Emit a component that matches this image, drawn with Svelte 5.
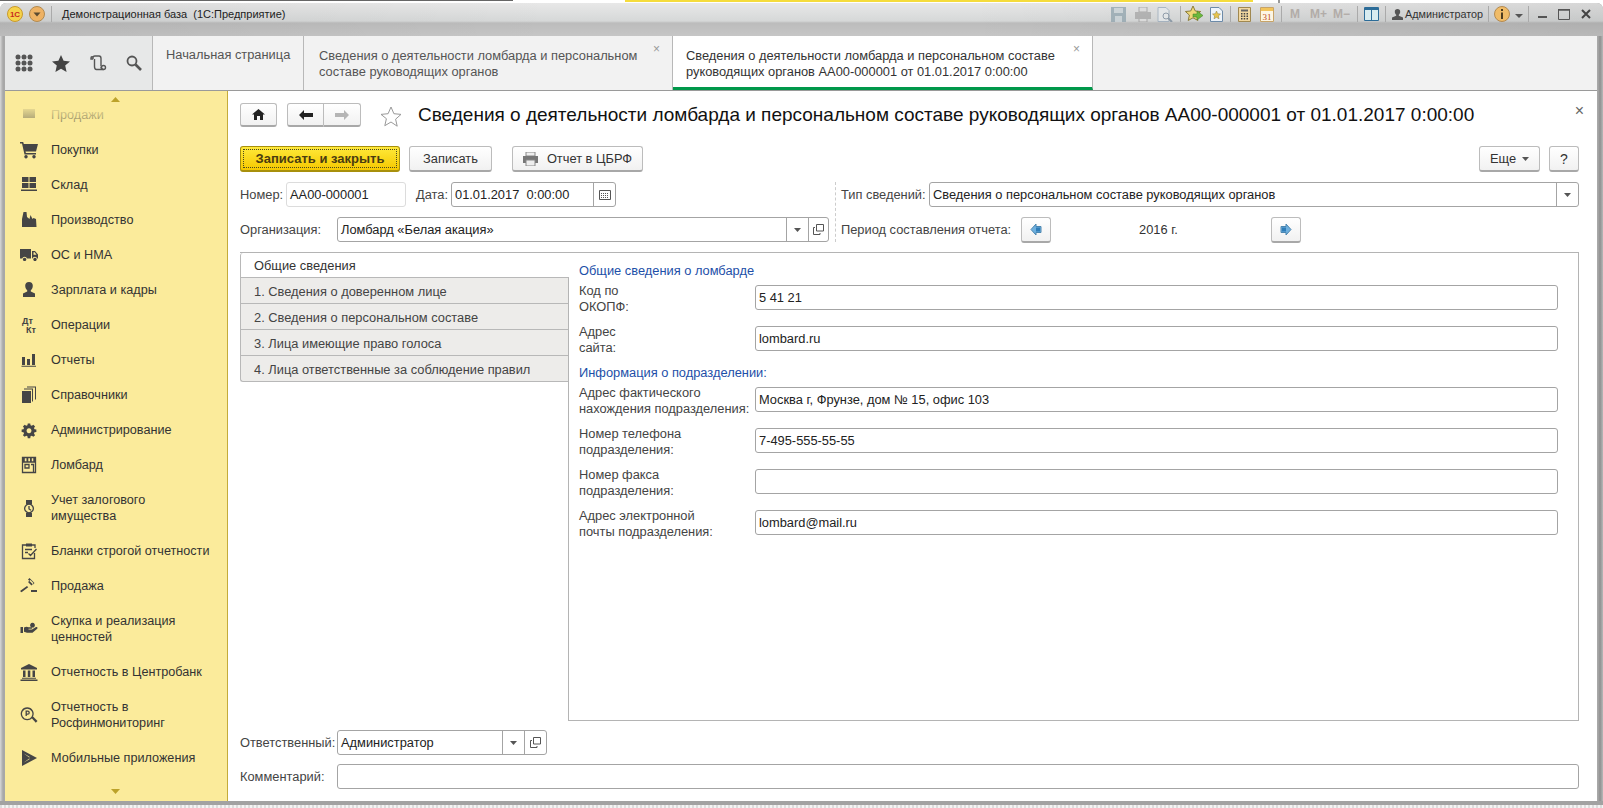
<script>
  const menu = [
    { t: 'Продажи', d: 'M3 3h12v9H3z' },
    { t: 'Покупки', d: 'M0 1h3.200l.6 2H18l-2 7.500H5.500l.4 1.500H16v1.500H4.500L2 2.500H0zM6 14a1.700 1.700 0 1 1-.01 0zM14 14a1.700 1.700 0 1 1-.01 0z' },
    { t: 'Склад', d: 'M2 1h6.500v5H2zM9.500 1H16v5H9.500zM2 7h6.500v5H2zM9.500 7H16v5H9.500zM1 13.500h16V15H1z' },
    { t: 'Производство', d: 'M2 16V8l1.500-7h3l.5 5 2.500 2 1-4 2 4 1-1 2.500 1 .5 8z' },
    { t: 'ОС и НМА', d: 'M0 3h11v9.500H7a2.500 2.500 0 0 0-4.800 0H0zM12 5h3l3 3.500v4h-.800a2.500 2.500 0 0 0-4.800 0H12zM13.500 6.300v2.500h3L14.700 6.300zM4.600 11.700a1.700 1.700 0 1 1-.01 0zM15 11.700a1.700 1.700 0 1 1-.01 0z' },
    { t: 'Зарплата и кадры', d: 'M9 1a3.800 3.800 0 0 1 3.800 3.800c0 2-1 3.800-2 4.500v1.200L15 12.500V16H3v-3.500l4.200-2V9.300c-1-.7-2-2.500-2-4.500A3.800 3.800 0 0 1 9 1z' },
    { t: 'Операции', label: true },
    { t: 'Отчеты', d: 'M2 6h3v8H2zM7 8h3v6H7zM12 3h3v11h-3zM1.500 14.800h14.500v1H1.500z' },
    { t: 'Справочники', d: 'M2 5h9v12H2zM12 3.500v12h1v-13H4v1zM15 1.500v12h1V.500H7v1z' },
    { t: 'Администрирование', vb: '-2 -2 22 22', d: 'M7.500 1h3l.4 2.200 1.500.7L14.300 2.600l2.100 2.100-1.300 1.900.6 1.500 2.300.4v3l-2.300.4-.6 1.500 1.300 1.900-2.100 2.100-1.900-1.300-1.500.6-.4 2.300h-3l-.4-2.300-1.500-.6-1.900 1.300-2.100-2.100 1.300-1.900-.6-1.500L0 11.500v-3l2.300-.4.6-1.500-1.300-1.900 2.100-2.100 1.900 1.300 1.500-.7zM9 7a3 3 0 1 0 .01 0z' },
    { t: 'Ломбард', s: 'M2.500 1.500h13v15h-13zM2.500 6h13M5 8.500h4v3.500H5zM11 8.500h2.500v8', d: 'M3 2h1.800v4H3zM6.500 2h1.800v4H6.500zM10 2h1.800v4H10zM13.300 2H15v4h-1.700z' },
    { t: 'Учет залогового\nимущества', two: true, s: 'M9 5.200a4.300 4.300 0 1 0 .01 0zM9 7v3l2 1.200', d: 'M6 1h6v4H6zM6 14h6v4H6z' },
    { t: 'Бланки строгой отчетности', s: 'M6 3H2.500v13.500h12V11M11.500 3H15v3M5 7.500h7M5 10.500h3M8.500 11.500l2 2 6-6.500', d: 'M6 1.500h6v3H6z' },
    { t: 'Продажа', d: 'M0 14l7-5 1.200 1.300-6.700 5zM8 2.500l1.500-1.500 5 5-1.500 1.500zM8 5l2.500-2 3 3-2 2.500zM11 13h6v2h-6z' },
    { t: 'Скупка и реализация\nценностей', two: true, d: 'M.500 7H3v6H.500zM4 7.500c2-1 3-1 4.500-.300h3c1 0 1 1.500 0 1.500H8.500v.800h3.500l4-2.500c1.300-.500 2 .800 1.200 1.700l-4.700 4H7l-3-1zM12.500 2.800a2.400 2.400 0 1 1-.01 0z' },
    { t: 'Отчетность в Центробанк', d: 'M9 1l8 4v1.500H1V5zM3 7.500h2.500V14H3zM7.800 7.500h2.500V14H7.800zM12.500 7.500H15V14h-2.500zM2 14.800h14v1H2zM.500 16.500h17V18H.500z' },
    { t: 'Отчетность в\nРосфинмониторинг', two: true, s: 'M7.200 2a5.800 5.800 0 1 0 .01 0zM6.200 10V5.200h1.500a1.500 1.500 0 0 1 0 3H6.200', d: 'M11.300 11.800l1.500-1.500 4.700 4.700-1.700 1.700z' },
    { t: 'Мобильные приложения', d: 'M2 1l15 8-15 8zM3.500 4.200l5.700 4.300.6-.4zM3.500 13.800l5.700-4.300.6.400z' }
  ];

  const infoRows = [
    { label: 'Адрес фактического\nнахождения подразделения:', value: 'Москва г, Фрунзе, дом № 15, офис 103' },
    { label: 'Номер телефона\nподразделения:', value: '7-495-555-55-55' },
    { label: 'Номер факса\nподразделения:', value: '' },
    { label: 'Адрес электронной\nпочты подразделения:', value: 'lombard@mail.ru' }
  ];
</script>

{#snippet openIcon()}
  <svg width="11" height="11" viewBox="0 0 11 11" fill="none" stroke="#555"><path d="M3.500 .5h7v6.500h-7zM2 3.500H.5v7h6.500V9" /></svg>
{/snippet}

{#snippet caret()}
  <svg width="7" height="4" viewBox="0 0 7 4"><path d="M0 0h7L3.500 4z" fill="#555" /></svg>
{/snippet}

{#snippet sep(cls)}
  <i class="tsep {cls}"></i>
{/snippet}

<div class="page">
  <div class="strip-top">
    <i class="s-a"></i><i class="s-b"></i><i class="s-c"></i><i class="s-d"></i>
  </div>

  <div class="window">
    <div class="titlebar">
      <svg class="logo" width="16" height="16" viewBox="0 0 16 16">
        <circle cx="8" cy="8" r="7.500" fill="#f6d24a" stroke="#c89a2e" />
        <text x="8" y="11" text-anchor="middle" font-size="8" font-weight="700" fill="#c8281e" font-family="Liberation Sans">1С</text>
      </svg>
      <svg class="menu-btn" width="16" height="16" viewBox="0 0 16 16">
        <circle cx="8" cy="8" r="7.500" fill="#eeb264" stroke="#b28a50" />
        <path d="M4.500 6.500h7L8 10.500z" fill="#5b4a30" />
      </svg>
      <i class="tsep first"></i>
      <span class="app-title">Демонстрационная база  (1С:Предприятие)</span>

      <div class="tools">
        <svg class="dim" width="15" height="15" viewBox="0 0 15 15"><path d="M0 0h15v15H0z" fill="#8fa3ad" /><path d="M3 1h9v5H3zM4 9h7v6H4z" fill="#c6d0d5" /></svg>
        <svg class="dim g9" width="16" height="15" viewBox="0 0 16 15"><path d="M4 0h8v5H4zM4 10h8v5H4z" fill="#ddd" stroke="#999" /><path d="M0 5h16v7H0z" fill="#a5a5a5" /></svg>
        <svg class="dim g6" width="16" height="15" viewBox="0 0 16 15" fill="none"><path d="M1 .5h8l3 3v11H1z" fill="#e6eaec" stroke="#9ab" /><circle cx="9" cy="9" r="3" stroke="#789" /><path d="M11 11l4 4" stroke="#789" stroke-width="2" /></svg>
        {@render sep('g7')}
        <svg class="g4" width="18" height="16" viewBox="0 0 18 16"><path d="M8 0l2.300 5 5.400.5-4 3.600 1.200 5.400L8 11.800l-4.800 2.700 1.200-5.400-4-3.600L5.700 5z" fill="#eed878" stroke="#8c7c3a" /><path d="M8 8h4V5l6 4.500-6 4.500v-3H8z" fill="#6cb83c" stroke="#3c7c22" stroke-width=".5" /></svg>
        <svg class="g7" width="13" height="15" viewBox="0 0 13 15"><path d="M.5.5h8.500l3.500 3.500v10.500H.5z" fill="#eef4fa" stroke="#6c8aa8" /><path d="M6.500 4l1.200 2.700 2.800.3-2.100 1.900.6 2.900-2.500-1.500L4 11.800l.6-2.900L2.500 7l2.800-.3z" fill="#e8c44c" stroke="#8c7c3a" stroke-width=".5" /></svg>
        {@render sep('g7')}
        <svg class="g7" width="13" height="15" viewBox="0 0 13 15"><path d="M.5.5h12v14H.5z" fill="#f2d8a0" stroke="#a08850" /><path d="M3 2.500h7v2H3z" fill="#666" /><path d="M3 6h1.500v1.500H3zM5.700 6h1.500v1.500H5.700zM8.500 6H10v1.500H8.500zM3 8.500h1.500V10H3zM5.700 8.500h1.500V10H5.700zM8.500 8.500H10V10H8.500zM3 11h1.500v1.500H3zM5.700 11h1.500v1.500H5.700zM8.500 11H10v1.500H8.500z" fill="#444" /></svg>
        <svg class="g9" width="14" height="15" viewBox="0 0 14 15"><path d="M.5.5h13v14H.5z" fill="#fdf6e4" stroke="#c8a468" /><path d="M1 1h12v3H1z" fill="#f2c45c" /><text x="7" y="13" text-anchor="middle" font-size="9" fill="#c04a14" font-family="Liberation Serif">31</text></svg>
        {@render sep('g7')}
        <span class="mem g8">M</span>
        <span class="mem g10">M+</span>
        <span class="mem g6">M−</span>
        {@render sep('g7')}
        <svg class="g6" width="15" height="14" viewBox="0 0 15 14"><path d="M.5.5h14v13H.5z" fill="#fff" stroke="#2c6c98" /><path d="M1 1h13v2H1z" fill="#2c6c98" /><path d="M7.500 1v12" stroke="#2c6c98" /><path d="M1 3h6v10H1zM8 3h6v10H8z" fill="#d8ecf0" /></svg>
        {@render sep('g6')}
        <svg class="g6" width="11" height="11" viewBox="0 0 11 11"><path d="M5.500 0a2.700 2.700 0 0 1 2.700 2.700c0 1.300-.7 2.600-1.400 3v1L11 8.500V11H0V8.500l4.200-1.800v-1c-.7-.4-1.400-1.700-1.400-3A2.700 2.700 0 0 1 5.500 0z" fill="#555" /></svg>
        <span class="user-name g2">Администратор</span>
        {@render sep('g5')}
        <svg class="g5" width="16" height="16" viewBox="0 0 16 16"><circle cx="8" cy="8" r="7.500" fill="#f0bc68" stroke="#b48a50" /><path d="M7 3h2v2H7zM7 6.500h2V13H7z" fill="#4c3c20" /></svg>
        <svg class="info-caret g5" width="8" height="4" viewBox="0 0 8 4"><path d="M0 0h8L4 4z" fill="#555" /></svg>
        {@render sep('g5')}
        <svg class="g9" width="9" height="10" viewBox="0 0 9 10"><path d="M0 7h9v2H0z" fill="#555" /></svg>
        <svg class="g11" width="12" height="11" viewBox="0 0 12 11" fill="none"><path d="M.5 1h11v9.500H.5z" stroke="#555" /><path d="M0 0h12v1.500H0z" fill="#555" /></svg>
        <svg class="g11" width="10" height="10" viewBox="0 0 10 10"><path d="M1 1l8 8M9 1l-8 8" stroke="#444" stroke-width="2" /></svg>
      </div>
    </div>

    <div class="inner">
      <div class="tabbar">
        <div class="quick">
          <svg width="18" height="18" viewBox="0 0 18 18" fill="#555">
            <circle cx="3" cy="3" r="2.500" /><circle cx="9" cy="3" r="2.500" /><circle cx="15" cy="3" r="2.500" />
            <circle cx="3" cy="9" r="2.500" /><circle cx="9" cy="9" r="2.500" /><circle cx="15" cy="9" r="2.500" />
            <circle cx="3" cy="15" r="2.500" /><circle cx="9" cy="15" r="2.500" /><circle cx="15" cy="15" r="2.500" />
          </svg>
          <svg width="18" height="17" viewBox="0 0 18 17"><path d="M9 0l2.600 5.800 6.400.6-4.800 4.200 1.400 6.400L9 13.700 3.400 17l1.400-6.400L0 6.400l6.400-.6z" fill="#444" /></svg>
          <svg width="17" height="16" viewBox="0 0 17 16" fill="none" stroke="#555" stroke-width="1.400"><path d="M3 4V2.500A1.800 1.800 0 0 1 4.800 1H9c1.500 0 2 1 2 2.500V11M3 2.500C3 1.500 1 1.500 1 3v1h2M11 11.500c0 1.500 1 3 2.500 3H6.500C5 14.500 4.500 13 4.500 11.500V4" /><circle cx="13.500" cy="12.500" r="2" /></svg>
          <svg width="16" height="16" viewBox="0 0 16 16" fill="none" stroke="#555"><circle cx="6" cy="6" r="4.500" stroke-width="1.800" /><path d="M9.500 9.500l5.500 5.500" stroke-width="2.600" /></svg>
        </div>
        <div class="tab t1"><span>Начальная страница</span></div>
        <div class="tab t2">
          <span>Сведения о деятельности ломбарда и персональном<br />составе руководящих органов</span>
          <b class="x">×</b>
        </div>
        <div class="tab t3">
          <span>Сведения о деятельности ломбарда и персональном составе<br />руководящих органов АА00-000001 от 01.01.2017 0:00:00</span>
          <b class="x">×</b>
        </div>
        <div class="tab-rest"></div>
      </div>

      <div class="body">
        <aside class="side">
          <svg class="arr up" width="9" height="5" viewBox="0 0 9 5"><path d="M4.500 0L9 5H0z" fill="#bca22a" /></svg>
          <i class="fade"></i>
          {#each menu as m}
            <div class="mi" class:two={m.two}>
              <svg class="mi-ic" width="18" height="18" viewBox={m.vb || '0 0 18 18'}>
                {#if m.label}
                  <text x="2" y="8" font-size="9" font-weight="700" fill="#444" font-family="Liberation Sans">Дт</text>
                  <text x="6" y="17" font-size="9" font-weight="700" fill="#444" font-family="Liberation Sans">Кт</text>
                {/if}
                {#if m.d}<path d={m.d} fill="#454545" fill-rule="evenodd" />{/if}
                {#if m.s}<path d={m.s} fill="none" stroke="#454545" stroke-width="1.300" />{/if}
              </svg>
              <span>{m.t}</span>
            </div>
          {/each}
          <svg class="arr down" width="9" height="5" viewBox="0 0 9 5"><path d="M0 0h9L4.500 5z" fill="#bca22a" /></svg>
        </aside>

        <main class="main">
          <div class="head">
            <button class="btn home">
              <svg width="13" height="11" viewBox="0 0 13 11"><path d="M6.500 0L13 5.500h-2V11H8V7H5v4H2V5.500H0z" fill="#222" /></svg>
            </button>
            <div class="nav">
              <button class="btn back"><svg width="14" height="10" viewBox="0 0 14 10"><path d="M0 5l5-5v3h9v4H5v3z" fill="#222" /></svg></button>
              <button class="btn fwd"><svg width="14" height="10" viewBox="0 0 14 10"><path d="M14 5L9 0v3H0v4h9v3z" fill="#b5b5b5" /></svg></button>
            </div>
            <svg class="fav" width="22" height="21" viewBox="0 0 22 21"><path d="M11 1l2.900 6.700 7.100.7-5.400 4.800 1.600 7L11 16l-6.200 3.700 1.600-7L1 8.400l7.100-.7z" fill="#fff" stroke="#999" /></svg>
            <h1>Сведения о деятельности ломбарда и персональном составе руководящих органов АА00-000001 от 01.01.2017 0:00:00</h1>
            <span class="close">×</span>
          </div>

          <div class="cmd">
            <button class="btn primary"><span>Записать и закрыть</span></button>
            <button class="btn save">Записать</button>
            <button class="btn report">
              <svg width="15" height="14" viewBox="0 0 15 14"><path d="M3 0h9v4H3z" fill="#eee" stroke="#888" /><path d="M0 4h15v7H0z" fill="#777" /><path d="M3 8h9v6H3z" fill="#eee" stroke="#888" /></svg>
              Отчет в ЦБРФ
            </button>
            <button class="btn more">Еще {@render caret()}</button>
            <button class="btn help">?</button>
          </div>

          <div class="hdr">
            <div class="hdr-l">
              <div class="row">
                <label for="n">Номер:</label>
                <div class="fld light w-num" id="n">АА00-000001</div>
                <label class="lbl-date" for="dt">Дата:</label>
                <div class="fld w-date" id="dt">
                  <span class="val">01.01.2017  0:00:00</span>
                  <i class="fb">
                    <svg width="12" height="10" viewBox="0 0 12 10"><path d="M.5.5h11v9H.5z" fill="#fff" stroke="#555" /><path d="M2 3h1v1H2zM4 3h1v1H4zM6 3h1v1H6zM8 3h1v1H8zM2 5h1v1H2zM4 5h1v1H4zM6 5h1v1H6zM8 5h1v1H8zM2 7h1v1H2zM4 7h1v1H4zM6 7h1v1H6zM8 7h1v1H8z" fill="#555" /></svg>
                  </i>
                </div>
              </div>
              <div class="row">
                <label class="lbl-org" for="org">Организация:</label>
                <div class="fld grow" id="org">
                  <span class="val">Ломбард «Белая акация»</span>
                  <i class="fb">{@render caret()}</i>
                  <i class="fb">{@render openIcon()}</i>
                </div>
              </div>
            </div>
            <div class="hdr-r">
              <div class="row">
                <label class="lbl-type" for="tp">Тип сведений:</label>
                <div class="fld grow" id="tp">
                  <span class="val">Сведения о персональном составе руководящих органов</span>
                  <i class="fb">{@render caret()}</i>
                </div>
              </div>
              <div class="row">
                <span class="lbl-period">Период составления отчета:</span>
                <button class="btn arrow">
                  <svg width="12" height="13" viewBox="0 0 12 13"><path d="M1 6.500L6 1v2.500h5v6H6V12z" fill="#6fb0de" stroke="#4c86b0" /><path d="M6 4.500h4v4H6z" fill="#2f7db8" /></svg>
                </button>
                <span class="year">2016 г.</span>
                <button class="btn arrow">
                  <svg width="12" height="13" viewBox="0 0 12 13"><path d="M11 6.500L6 1v2.500H1v6h5V12z" fill="#6fb0de" stroke="#4c86b0" /><path d="M2 4.500h4v4H2z" fill="#2f7db8" /></svg>
                </button>
              </div>
            </div>
          </div>

          <section class="panel">
            <div class="vtabs">
              <div class="vt active">Общие сведения</div>
              <div class="vt">1. Сведения о доверенном лице</div>
              <div class="vt">2. Сведения о персональном составе</div>
              <div class="vt">3. Лица имеющие право голоса</div>
              <div class="vt">4. Лица ответственные за соблюдение правил</div>
            </div>
            <div class="pane">
              <h2>Общие сведения о ломбарде</h2>
              <div class="frow">
                <div class="flabel">{'Код по\nОКОПФ:'}</div>
                <div class="fld"><span class="val">5 41 21</span></div>
              </div>
              <div class="frow">
                <div class="flabel">{'Адрес\nсайта:'}</div>
                <div class="fld"><span class="val">lombard.ru</span></div>
              </div>
              <h2 class="second">Информация о подразделении:</h2>
              {#each infoRows as r}
                <div class="frow">
                  <div class="flabel">{r.label}</div>
                  <div class="fld"><span class="val">{r.value}</span></div>
                </div>
              {/each}
            </div>
          </section>

          <div class="row foot1">
            <label class="lbl-org" for="resp">Ответственный:</label>
            <div class="fld w-resp" id="resp">
              <span class="val">Администратор</span>
              <i class="fb">{@render caret()}</i>
              <i class="fb">{@render openIcon()}</i>
            </div>
          </div>
          <div class="row foot2">
            <label class="lbl-org" for="cm">Комментарий:</label>
            <div class="fld grow" id="cm"></div>
          </div>
        </main>
      </div>
    </div>
  </div>

  <div class="strip-bottom"></div>
</div>

<style>
  :global(body) {
    margin: 0;
    background: #fff;
  }
  .page {
    width: 1603px;
    height: 808px;
    overflow: hidden;
    font-family: "Liberation Sans", Arial, sans-serif;
    font-size: 12.85px;
    color: #333;
    display: flex;
    flex-direction: column;
  }
  .page i {
    display: block;
    font-style: normal;
  }

  .strip-top {
    height: 3px;
    display: flex;
    background: #fff;
  }
  .s-a {
    width: 513px;
    height: 1px;
    background: #666;
  }
  .s-b {
    width: 112px;
  }
  .s-c {
    width: 628px;
    height: 2px;
    background: #f5dc3c;
  }
  .s-d {
    width: 2px;
    height: 3px;
    margin-left: 25px;
    background: #999;
  }

  .window {
    flex: 1;
    display: flex;
    flex-direction: column;
    min-height: 0;
    padding: 0 6px 4px 5px;
    border-radius: 6px 6px 0 0;
    background: linear-gradient(90deg, #d8d8d8 0, #a8a8a8 3px, #a8a8a8 1598px, #909090 1600px, #b8b8b8 100%);
    box-shadow: inset 0 -4px 0 #a2a2a2;
  }
  .titlebar {
    height: 33px;
    margin: 0 -6px 0 -5px;
    padding: 0 12px 0 7px;
    box-sizing: border-box;
    display: flex;
    align-items: flex-start;
    border-radius: 6px 6px 0 0;
    background:
      linear-gradient(90deg, rgba(0, 0, 0, .05), transparent 35%, transparent 60%, rgba(0, 0, 0, .07)),
      linear-gradient(180deg, #e8e8e8 0, #d6d8d8 18px, #bcbcbc 20px, #c6c6c6 33px);
  }
  .logo {
    margin-top: 3px;
  }
  .menu-btn {
    margin: 3px 0 0 6px;
  }
  .tsep {
    width: 1px;
    height: 16px;
    background: #aaa;
  }
  .tsep.first {
    margin: 3px 0 0 6px;
  }
  .app-title {
    margin: 3px 0 0 10px;
    font-size: 11px;
    line-height: 16px;
    white-space: pre;
    color: #222;
  }
  .tools {
    margin-left: auto;
    display: flex;
    align-items: center;
    height: 22px;
  }
  .g2 { margin-left: 2px; }
  .g4 { margin-left: 4px; }
  .g5 { margin-left: 5px; }
  .g6 { margin-left: 6px; }
  .g7 { margin-left: 7px; }
  .g8 { margin-left: 8px; }
  .g9 { margin-left: 9px; }
  .g10 { margin-left: 10px; }
  .g11 { margin-left: 11px; }
  .dim {
    opacity: .75;
  }
  .mem {
    font-size: 12px;
    font-weight: 700;
    color: #b2aca8;
  }
  .user-name {
    font-size: 10.8px;
    color: #333;
  }
  .info-caret {
    margin-top: 4px;
  }

  .inner {
    flex: 1;
    min-height: 0;
    display: flex;
    flex-direction: column;
    background: #fff;
  }
  .tabbar {
    height: 55px;
    flex: none;
    box-sizing: border-box;
    display: flex;
    border-bottom: 1px solid #9a9a9a;
  }
  .quick {
    width: 148px;
    box-sizing: border-box;
    padding: 0 10px 0 10px;
    display: flex;
    align-items: center;
    justify-content: space-between;
    background: #e7e8e8;
    border-right: 1px solid #b8b8b8;
  }
  .tab {
    box-sizing: border-box;
    position: relative;
    background: #f2f2f2;
    border-right: 1px solid #b8b8b8;
    color: #555;
    line-height: 16px;
    white-space: nowrap;
  }
  .t1 {
    width: 151px;
    padding: 11px 0 0 13px;
  }
  .t2 {
    width: 369px;
    padding: 12px 0 0 15px;
  }
  .t3 {
    width: 420px;
    padding: 12px 0 0 13px;
    background: #fff;
    color: #333;
    border-bottom: 3px solid #00984a;
  }
  .x {
    position: absolute;
    top: 6px;
    right: 12px;
    font-weight: 400;
    font-size: 12px;
    line-height: 14px;
    color: #999;
  }
  .tab-rest {
    flex: 1;
    background: #f2f2f2;
  }

  .body {
    flex: 1;
    min-height: 0;
    display: flex;
  }
  .side {
    width: 223px;
    flex: none;
    position: relative;
    overflow: hidden;
    box-sizing: border-box;
    padding-top: 6px;
    background: #fbeb9b;
    border-right: 1px solid #c4ab3a;
    font-size: 12.65px;
  }
  .arr {
    position: absolute;
    left: 106px;
    z-index: 2;
  }
  .arr.up {
    top: 6px;
  }
  .arr.down {
    bottom: 7px;
  }
  .fade {
    position: absolute;
    inset: 0 0 auto 0;
    height: 31px;
    background: linear-gradient(180deg, #fbeb9b 45%, rgba(251, 235, 155, .5));
  }
  .mi {
    height: 35px;
    display: flex;
    align-items: center;
    color: #333;
    line-height: 16px;
  }
  .mi.two {
    height: 51px;
  }
  .mi-ic {
    flex: none;
    margin: 0 13px 0 15px;
  }
  .mi span {
    white-space: pre-line;
  }

  .main {
    flex: 1;
    min-width: 0;
    display: flex;
    flex-direction: column;
    padding: 12px 18px 0 12px;
    background: #fff;
  }
  .btn {
    box-sizing: border-box;
    height: 26px;
    padding: 0;
    margin: 0;
    display: inline-flex;
    align-items: center;
    justify-content: center;
    font: inherit;
    color: #333;
    border: 1px solid #bcbcbc;
    border-bottom: 2px solid #a8a8a8;
    border-radius: 3px;
    background: linear-gradient(180deg, #fff, #f1f1f1);
  }
  .head {
    height: 24px;
    display: flex;
    align-items: center;
  }
  .home {
    width: 37px;
    height: 24px;
  }
  .nav {
    display: flex;
    margin-left: 10px;
  }
  .back, .fwd {
    width: 37px;
    height: 24px;
    border-radius: 3px 0 0 3px;
  }
  .fwd {
    border-left: 0;
    border-radius: 0 3px 3px 0;
  }
  .fav {
    margin: 2px 0 0 19px;
  }
  h1 {
    margin: 0 0 0 16px;
    font-size: 19px;
    font-weight: 400;
    line-height: 24px;
    white-space: nowrap;
    color: #111;
  }
  .close {
    margin-left: auto;
    margin-right: -5px;
    margin-top: -8px;
    font-size: 16px;
    color: #666;
  }

  .cmd {
    display: flex;
    margin-top: 19px;
  }
  .primary {
    width: 160px;
    padding: 2px;
    font-size: 13px;
    font-weight: 700;
    color: #4a3c10;
    border: 1px solid #a8900c;
    border-bottom-width: 2px;
    background: linear-gradient(180deg, #ffe93a, #f5c800);
  }
  .primary span {
    flex: 1;
    align-self: stretch;
    line-height: 18px;
    border: 1px dotted #4a4a20;
  }
  .save {
    width: 83px;
    margin-left: 9px;
  }
  .report {
    width: 131px;
    margin-left: 20px;
    gap: 9px;
  }
  .more {
    width: 61px;
    margin-left: auto;
    gap: 6px;
  }
  .help {
    width: 30px;
    margin-left: 9px;
    font-size: 14px;
  }

  .hdr {
    display: flex;
    margin-top: 10px;
  }
  .hdr-l {
    width: 589px;
    flex: none;
  }
  .hdr-r {
    flex: 1;
    margin-left: 6px;
    padding-left: 5px;
    border-left: 1px dashed #ccc;
  }
  .row {
    display: flex;
    align-items: center;
    height: 25px;
  }
  .row + .row {
    margin-top: 10px;
  }
  label, .lbl-period {
    color: #444;
    white-space: nowrap;
  }
  label[for="n"] {
    width: 46px;
  }
  .lbl-date {
    width: 35px;
    margin-left: 10px;
  }
  .lbl-org {
    width: 97px;
  }
  .lbl-type {
    width: 88px;
  }
  .lbl-period {
    width: 180px;
  }
  .fld {
    box-sizing: border-box;
    height: 25px;
    flex: 1;
    display: flex;
    align-items: stretch;
    min-width: 0;
    border: 1px solid #a4a4a4;
    border-radius: 3px;
    background: #fff;
    color: #222;
    line-height: 23px;
    white-space: pre;
  }
  .val {
    flex: 1;
    padding-left: 3px;
  }
  .light {
    border-color: #dcdcdc;
    padding-left: 3px;
  }
  .w-num {
    flex: none;
    width: 120px;
  }
  .w-date {
    flex: none;
    width: 165px;
  }
  .w-resp {
    flex: none;
    width: 210px;
  }
  .grow {
    flex: 1;
  }
  .fb {
    flex: none;
    width: 21px;
    display: flex !important;
    align-items: center;
    justify-content: center;
    border-left: 1px solid #a4a4a4;
  }
  #org .fb:last-child {
    width: 19px;
  }
  .arrow {
    width: 30px;
    height: 26px;
  }
  .year {
    width: 220px;
    text-align: center;
    color: #333;
    box-sizing: border-box;
    padding-right: 5px;
  }

  .panel {
    height: 469px;
    flex: none;
    margin-top: 10px;
    display: flex;
    border-top: 1px solid #b4b4b4;
    box-sizing: border-box;
  }
  .vtabs {
    width: 328px;
    flex: none;
    position: relative;
    z-index: 1;
  }
  .vt {
    box-sizing: border-box;
    height: 26px;
    padding-left: 13px;
    line-height: 27px;
    color: #444;
    background: #edecea;
    border: 1px solid #b8b8b8;
    border-top: 0;
    border-right: 0;
  }
  .vt:last-child {
    border-radius: 0 0 0 3px;
  }
  .vt.active {
    width: 329px;
    height: 25px;
    line-height: 25px;
    background: #fff;
    color: #333;
    border-radius: 3px 0 0 0;
  }
  .pane {
    flex: 1;
    box-sizing: border-box;
    padding: 10px 20px 0 10px;
    border: 1px solid #b4b4b4;
    border-top: 0;
  }
  h2 {
    margin: 0;
    font-size: 12.85px;
    font-weight: 400;
    line-height: 16px;
    color: #1d4fa8;
  }
  h2.second {
    margin-top: 9px;
  }
  .frow {
    height: 32px;
    display: flex;
    margin-top: 9px;
    line-height: 16px;
  }
  h2 + .frow {
    margin-top: 4px;
  }
  .frow .fld {
    margin-top: 2px;
    line-height: 23px;
  }
  .flabel {
    width: 176px;
    flex: none;
    color: #444;
    white-space: pre-line;
  }
  .foot1 {
    margin-top: 9px;
  }
  .foot2 {
    margin-top: 9px !important;
  }
  .strip-bottom {
    height: 3px;
    flex: none;
    background: repeating-linear-gradient(90deg, #ddd 0, #ddd 2px, #f4f4f4 2px, #f4f4f4 4px);
  }
</style>
